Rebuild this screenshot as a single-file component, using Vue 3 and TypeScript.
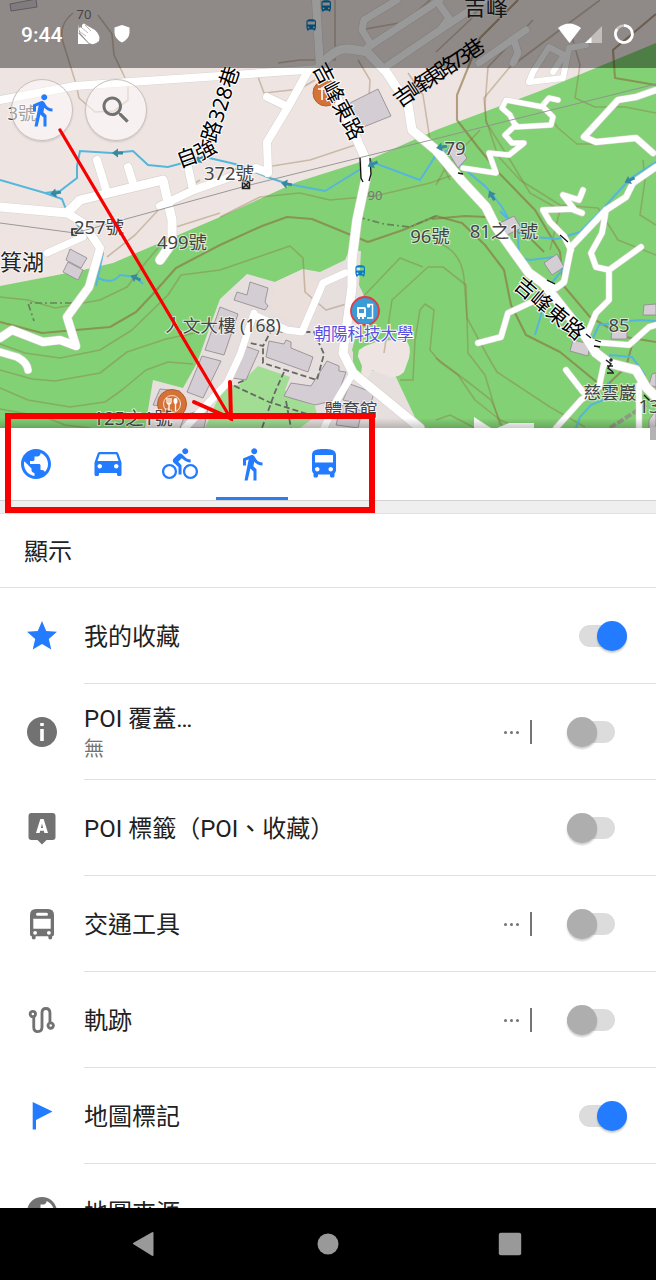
<script setup lang="ts">
type IconName = 'star' | 'info' | 'label' | 'transit' | 'track' | 'flag' | 'globe'

interface Layer {
  title: string
  subtitle?: string
  icon: IconName
  on?: boolean
  more?: boolean
  bare?: boolean
}

interface Label {
  x: number
  y: number
  text: string
  kind: string
  angle?: number
}

const icons: Record<string, string> = {
  star: 'M12 17.27 18.18 21l-1.64-7.03L22 9.24l-7.19-.61L12 2 9.19 8.63 2 9.24l5.46 4.73L5.82 21z',
  info: 'M12 2C6.48 2 2 6.48 2 12s4.48 10 10 10 10-4.48 10-10S17.52 2 12 2zm1.2 16h-2.4v-8h2.4v8zm0-10h-2.4V6h2.4v2z',
  label:
    'M5 2h14q2 0 2 2v14q0 2-2 2h-4l-3 3-3-3H5q-2 0-2-2V4q0-2 2-2zm5.9 4L8 15.4h2.4l.4-1.5h2.4l.4 1.5H16L13.1 6zm1.1 3 .7 3h-1.4z',
  transit:
    'M8 2h8q4 0 4 4v13q0 1-1.2 1.2V21a1.3 1.3 0 0 1-2.6 0v-.8H7.8V21a1.3 1.3 0 0 1-2.6 0v-.8Q4 20 4 19V6q0-4 4-4zm1 2.500Q8 4.500 8 5.500t1 1h6q1 0 1-1t-1-1zM6.2 8.500v6.600h11.6V8.500zM7.4 16.600a1.3 1.3 0 1 0 0 2.6 1.3 1.3 0 0 0 0-2.6zm9.2 0a1.3 1.3 0 1 0 0 2.6 1.3 1.3 0 0 0 0-2.6z',
  flag: 'M5.8 2.7 19 9 8 14.6V21H5.8z',
  globe:
    'M12 2C6.48 2 2 6.48 2 12s4.48 10 10 10 10-4.48 10-10S17.52 2 12 2zm-1 17.93c-3.95-.49-7-3.85-7-7.93 0-.62.08-1.21.21-1.79L9 15v1c0 1.1.9 2 2 2v1.93zm6.9-2.54c-.26-.81-1-1.39-1.9-1.39h-1v-3c0-.55-.45-1-1-1H8v-2h2c.55 0 1-.45 1-1V7h2c1.1 0 2-.9 2-2v-.41c2.93 1.19 5 4.06 5 7.41 0 2.08-.8 3.97-2.1 5.39z',
  car: 'M18.92 5.01C18.72 4.42 18.16 4 17.5 4h-11c-.66 0-1.21.42-1.42 1.01L3 11v8c0 .55.45 1 1 1h1c.55 0 1-.45 1-1v-1h12v1c0 .55.45 1 1 1h1c.55 0 1-.45 1-1v-8l-2.08-5.99zM6.5 15c-.83 0-1.5-.67-1.5-1.5S5.67 12 6.5 12s1.5.67 1.5 1.5S7.33 15 6.5 15zm11 0c-.83 0-1.5-.67-1.5-1.5s.67-1.5 1.5-1.5 1.5.67 1.5 1.5-.67 1.5-1.5 1.5zM5 10l1.5-4.5h11L19 10H5z',
  bike: 'M15.5 5.5c1.1 0 2-.9 2-2s-.9-2-2-2-2 .9-2 2 .9 2 2 2zM5 12c-2.8 0-5 2.2-5 5s2.2 5 5 5 5-2.2 5-5-2.2-5-5-5zm0 8.5c-1.9 0-3.5-1.6-3.5-3.5s1.6-3.5 3.5-3.5 3.5 1.6 3.5 3.5-1.6 3.5-3.5 3.5zm5.8-10l2.4-2.4.8.8c1.3 1.3 3 2.1 5.1 2.1V9c-1.5 0-2.7-.6-3.6-1.5l-1.9-1.9c-.5-.4-1-.6-1.6-.6s-1.1.2-1.4.6L7.8 8.4c-.4.4-.6.9-.6 1.4 0 .6.2 1.1.6 1.4L11 14v5h2v-6.2l-2.2-2.3zM19 12c-2.8 0-5 2.2-5 5s2.2 5 5 5 5-2.2 5-5-2.2-5-5-5zm0 8.5c-1.9 0-3.5-1.6-3.5-3.5s1.6-3.5 3.5-3.5 3.5 1.6 3.5 3.5-1.6 3.5-3.5 3.5z',
  walk: 'M13.5 5.5c1.1 0 2-.9 2-2s-.9-2-2-2-2 .9-2 2 .9 2 2 2zM9.8 8.9L7 23h2.1l1.8-8 2.1 2v6h2v-7.5l-2.1-2 .6-3C14.8 12 16.8 13 19 13v-2c-1.9 0-3.5-1-4.3-2.4l-1-1.6c-.4-.6-1-1-1.7-1-.3 0-.5.1-.8.1L6 8.3V13h2V9.6l1.8-.7',
  bus: 'M4 16c0 .88.39 1.67 1 2.22V20c0 .55.45 1 1 1h1c.55 0 1-.45 1-1v-1h8v1c0 .55.45 1 1 1h1c.55 0 1-.45 1-1v-1.78c.61-.55 1-1.34 1-2.22V6c0-3.5-3.58-4-8-4s-8 .5-8 4v10zm3.5 1c-.83 0-1.5-.67-1.5-1.5S6.67 14 7.5 14s1.5.67 1.5 1.5S8.33 17 7.5 17zm9 0c-.83 0-1.5-.67-1.5-1.5s.67-1.5 1.5-1.5 1.5.67 1.5 1.5-.67 1.5-1.5 1.5zm1.5-6H6V6h12v5z',
  search:
    'M15.5 14h-.79l-.28-.27C15.41 12.59 16 11.11 16 9.5 16 5.91 13.09 3 9.5 3S3 5.91 3 9.5 5.91 16 9.5 16c1.61 0 3.09-.59 4.23-1.57l.27.28v.79l5 4.99L20.49 19l-4.99-5zm-6 0C7.01 14 5 11.99 5 9.5S7.01 5 9.5 5 14 7.01 14 9.5 11.99 14 9.5 14z',
}

const profiles = ['globe', 'car', 'bike', 'walk', 'bus']
const activeProfile = 'walk'

const layers: Layer[] = [
  { title: '我的收藏', icon: 'star', on: true },
  { title: 'POI 覆蓋…', subtitle: '無', icon: 'info', more: true },
  { title: 'POI 標籤（POI、收藏）', icon: 'label' },
  { title: '交通工具', icon: 'transit', more: true },
  { title: '軌跡', icon: 'track', more: true },
  { title: '地圖標記', icon: 'flag', on: true },
  { title: '地圖來源', icon: 'globe', bare: true },
]

const contours = [
  'M73 13Q58 25 63 42L76 84L79 98L95 112L114 111L128 100V84L114 55L112 34L98 15',
  'M0 297L28 300L55 308L100 300L127 287L146 262L176 227L220 213',
  'M0 344L25 353L60 358L100 350L132 330L168 295L181 275L220 270L290 246L303 258L305 292L326 310L360 300L400 258L423 267',
  'M0 370L32 379L55 381L100 373L127 352L166 339L195 333',
  'M0 388L28 400L70 407L105 402L122 390L146 370L168 362L193 364',
  'M0 409L45 417L65 425L90 428',
  'M107 257L135 235L163 205L200 180',
  'M220 217L260 197L300 193L330 200L375 196L430 183L450 176L470 168',
  'M358 60L370 80L368 115L355 145L310 160L266 167L235 169',
  'M258 77L264 93L300 89L315 80M278 63L300 60L335 60V0',
  'M384 353L392 300L428 267H443L466 285L468 353L485 375L500 425',
  'M436 242Q461 250 464 278L467 318L487 355L497 372L550 407L585 427',
  'M436 358L468 382L491 400L503 428M436 420L450 415L475 428',
  'M533 20L488 67L485 105L486 122L510 160L530 193L560 210L550 250',
  'M600 0L553 35L509 68L484 98L486 120L498 156L520 180L560 205L598 208L618 240L656 255',
  'M570 30L580 65L575 98L595 107L625 107L656 113',
  'M545 110L558 128L577 144H605M643 160L645 180L640 215L656 225',
  'M408 73L423 95L430 140L450 180M436 185L447 165L480 130',
  'M400 380L413 380L415 340L420 310L425 304L434 310L430 350L440 362L458 375L475 400L500 420L520 428',
  'M485 0L470 20L436 52M430 0L405 22L360 30',
]

const majorContours = [
  'M0 322L42 333L110 327L136 312L152 295L176 268L220 245L262 226L287 217L312 219L368 242L403 230L436 216L462 223L485 245L504 270L511 305L526 335L560 352L604 388L626 367L632 345',
  'M518 0L480 38L457 95V120L477 146L499 173L535 210L560 252L563 285L590 317L625 337L656 342',
  'M656 14L613 50L615 78L656 85',
  'M432 219L465 216L486 217L530 238L544 252',
]

const streams = [
  'M0 180L45 193L60 191L77 178V166L80 151L112 153L133 151L148 165L168 167L205 157L235 164L270 178L288 184L325 191L372 162L420 180L436 155L449 150L467 171L486 187L502 207L518 236L519 258L530 260L554 257M500 211L524 236L557 239L580 232L600 212L618 192L631 178L656 162',
  'M45 193L62 199L67 212L84 233L103 253L96 286M98 278Q112 285 120 275L136 277L143 284',
  'M555 256L563 269L550 285L535 335M586 353L599 325L620 322L640 320L656 321M607 365L610 355L632 357L645 375L638 387M608 382V398L591 405L580 417L576 428',
]

const roads = [
  { w: 8, d: 'M0 100L75 86L130 82L220 76L318 69' },
  { w: 8, d: 'M316 0L320 66M308 71L288 107L267 142L268 173M267 97L288 107M256 168L267 172' },
  { w: 9, d: 'M320 66L340 104L358 142L366 160V178L357 220L352 260V287L343 353L353 373L420 428' },
  { w: 9, d: 'M320 66Q335 48 347 49T367 52L387 73L408 105L412 130L436 150L461 180L486 207L496 227L529 273L543 283L586 337L596 353L609 363L636 370L646 387L656 397' },
  { w: 7, d: 'M397 0L364 20L362 30L370 43L367 53M440 0L367 48M387 66L440 30L485 0M436 0L449 18L440 30M526 30L479 63M514 40L518 53L513 63' },
  { w: 9, d: 'M0 207L67 213L80 200L163 180L172 220V243L160 260' },
  { w: 8, d: 'M97 160L107 193M128 167L133 183M188 167L193 190M160 206L194 190L256 168' },
  { w: 8, d: 'M67 213L83 223L100 248L89 287L67 317L76 346L60 340L43 342L12 330L0 338' },
  { w: 7, d: 'M83 237L47 253M0 352L17 357Q27 362 28 370' },
  { w: 7, d: 'M345 273L323 283L302 332L287 330M254 313L240 355L227 383L185 428M353 373L337 400L324 428M254 315L287 330' },
  { w: 6, d: 'M529 82L533 72L549 47L564 55L553 72M529 82L563 78L569 48L586 45' },
  { w: 5, d: 'M506 100L543 107L553 117L551 125L516 127L510 115L502 108L506 100M543 105L549 98L558 100M516 125L505 135L512 143L524 143L509 155L489 153L496 173L463 168' },
  { w: 6, d: 'M656 90L636 97L618 100L584 137L596 142L636 138L653 153M656 167L633 183L626 197L606 210L571 247L564 282L556 288L543 283' },
  { w: 5.500, d: 'M583 190L579 200L563 195L574 209L543 210L550 222L564 236L571 250M574 210L582 213M606 210L602 233L591 253L596 267L609 270V300L596 313L586 337M609 270L641 247' },
  { w: 5.500, d: 'M536 300L508 313L501 337L478 343M591 342L629 345L649 327L656 325M604 363L599 387L581 400L556 428M566 370L583 392M639 385V428' },
]

const buildings = [
  '10,4 36,-1 37,7 11,11', '350,103 378,89 391,116 361,128', '70,249 87,258 81,268 66,260', '68,262 83,270 78,280 63,272',
  '250,282 268,288 265,302 268,306 265,310 234,300 237,292 247,295', '220,307 238,314 224,355 205,350', '202,356 221,361 203,398 187,392',
  '245,346 259,351 246,380 232,378', '269,341 284,344 286,340 291,342 291,348 313,357 308,372 266,357',
  '327,361 339,366 339,371 346,372 336,400 315,405 284,396 291,383 311,386', '350,384 374,393 370,406 343,400',
  '341,405 362,411 358,428 336,425', '160,389 180,391 176,408 153,405', '185,415 208,408 204,428 180,428',
  '447,150 456,142 467,158 458,168', '500,223 514,216 521,228 507,235', '544,263 557,254 564,267 552,275', '644,305 656,304 656,315 643,315',
  '573,340 590,344 588,356 570,351', '612,330 627,331 627,339 611,339', '652,374 656,373 656,387 649,385', '649,420 656,410 656,428 649,428',
]

const arrows = [
  { x: 118, y: 153, a: 180 }, { x: 56, y: 193, a: 170 }, { x: 287, y: 184, a: 190 }, { x: 373, y: 164, a: 155 },
  { x: 442, y: 147, a: 170 }, { x: 492, y: 196, a: 240 }, { x: 630, y: 180, a: 155 }, { x: 136, y: 278, a: 205 }, { x: 200, y: 159, a: 150 },
]

const labels: Label[] = [
  { x: 84, y: 19, text: '70', kind: 'contour' },
  { x: 375, y: 200, text: '90', kind: 'contour' },
  { x: 22, y: 120, text: '3號', kind: 'house' },
  { x: 229, y: 180, text: '372號', kind: 'house' },
  { x: 99, y: 234, text: '257號', kind: 'house' },
  { x: 182, y: 249, text: '499號', kind: 'house' },
  { x: 430, y: 243, text: '96號', kind: 'house' },
  { x: 504, y: 238, text: '81之1號', kind: 'house' },
  { x: 455, y: 155, text: '79', kind: 'house' },
  { x: 619, y: 332, text: '85', kind: 'house' },
  { x: 133, y: 425, text: '125之1號', kind: 'house' },
  { x: 649, y: 413, text: '13', kind: 'house' },
  { x: 223, y: 332, text: '人文大樓 (168)', kind: 'place' },
  { x: 351, y: 416, text: '體育館', kind: 'place' },
  { x: 610, y: 399, text: '慈雲巖', kind: 'place' },
  { x: 22, y: 270, text: '箕湖', kind: 'town' },
  { x: 486, y: 15, text: '吉峰', kind: 'town' },
  { x: 364, y: 340, text: '朝陽科技大學', kind: 'school' },
  { x: 187, y: 157, text: '自', kind: 'street', angle: -20 },
  { x: 205, y: 149, text: '強', kind: 'street', angle: -28 },
  { x: 220, y: 104, text: '路328巷', kind: 'street', angle: -72 },
  { x: 339, y: 101, text: '吉峰東路', kind: 'street', angle: 62 },
  { x: 437, y: 73, text: '吉峰東路73巷', kind: 'street tight', angle: -34 },
  { x: 550, y: 308, text: '吉峰東路', kind: 'street', angle: 40 },
]
</script>

<template>
  <div class="screen">
    <section class="map">
      <svg class="map-canvas" viewBox="0 0 656 428" width="656" height="428">
        <rect width="656" height="428" class="green" />
        <path class="urban" d="M0 0H656V43L540 91L436 130L373 158L297 182L220 217L113 263L83 270L0 286z" />
        <path class="campus" d="M220 299L247 274L275 282L303 269L320 272L345 260L349 251H361L359 285L366 300L352 350L362 372L377 370L395 375L420 428H145L153 380L183 388L197 363L213 318z" />
        <path class="urban" d="M359 350Q375 338 405 340Q412 345 409 358L404 372Q396 380 385 375L372 370L366 381L355 372z" />
        <path class="green" d="M353 345L362 366L361 374L353 370z" />
        <path class="lawn" d="M258 366L290 377L285 390L289 396L315 406L317 415L300 428H205L224 385H239z" />
        <path class="plaza" d="M275 282L303 269L312 278L320 284L301 328L270 310z" />

        <path v-for="(d, i) in contours" :key="'c' + i" :d="d" class="contour" />
        <path v-for="(d, i) in majorContours" :key="'m' + i" :d="d" class="contour major" />
        <path v-for="(d, i) in streams" :key="'s' + i" :d="d" class="stream" />
        <polygon v-for="(p, i) in buildings" :key="'b' + i" :points="p" class="building" />
        <path class="path" d="M242 341L263 346L271 331L287 332L314 332L324 354L317 380L263 363V346M226 382L269 402L320 418M284 372L275 392L262 428M286 401L291 428M238 383L245 380" />
        <path class="trail" d="M72 303H28L34 321M358 217L384 224L410 227L436 216" />
        <path class="trail wide" d="M610 428L647 404" />

        <path v-for="(r, i) in roads" :key="'e' + i" :d="r.d" class="road-edge" :stroke-width="r.w + 1.2" />
        <path v-for="(r, i) in roads" :key="'r' + i" :d="r.d" class="road" :stroke-width="r.w" />
        <path class="white" d="M474 417L491 428H474zM497 428L509 423H534V428z" />
        <path class="powerline" d="M0 223L75 233L246 186L656 84" />
        <path class="culvert" d="M360 158L361 178L363 182M370 158L371 174L369 181M458 173L463 174M560 235L568 242M547 280L555 284M586 334L591 338M595 340L601 342M594 346L600 347M644 395L650 401" />
        <g v-for="(a, i) in arrows" :key="'a' + i" :transform="`translate(${a.x} ${a.y}) rotate(${a.a})`">
          <path class="flow" d="M-5-1.500H0V-4.500L6 0L0 4.500V1.500H-5z" />
        </g>

        <g transform="translate(326 93)">
          <circle r="13" class="food" />
          <path d="M-4-6V7M4-6V7M-8-4H8" class="cutlery" />
        </g>
        <g transform="translate(172 404)">
          <circle r="14.5" class="food" />
          <circle r="8.500" class="plate" />
          <path d="M-5-6V-2Q-5 0-3 0T-1-2V-6M-3-6V7" class="cutlery thin" />
          <ellipse cx="3.500" cy="-3" rx="2" ry="3" class="white" />
          <path d="M3.500-2V7" class="cutlery thin" />
        </g>
        <g transform="translate(365 311)">
          <circle r="14" class="stop" />
          <path class="white" fill-rule="evenodd" d="M-7-4H-1Q1-4 1-2V6H-1V8H-3V6H-5V8H-7V6H-8V-3Q-8-4-7-4zM-6-2V2H-1V-2z" />
          <path class="shelter" d="M2-6.500H7.500V7H2" />
          <circle cx="3.500" cy="-5" r="1.700" class="white" />
        </g>
        <g class="bus-marks">
          <path :d="icons.bus" transform="translate(353 264) scale(.6)" />
          <path :d="icons.bus" transform="translate(304 18) scale(.6)" />
          <path :d="icons.bus" transform="translate(319 -1) scale(.6)" />
        </g>
        <g class="mini">
          <rect x="242.5" y="181.5" width="7" height="7" /><path d="M243 182L249 188M249 182L243 188" />
          <path d="M78 229H72V235H77M74 232H77" />
          <path d="M606 360L611 364L608 368L613 372M607 366L613 366M607 373H614" />
          <circle cx="611" cy="360" r="1" />
        </g>

        <text
          v-for="l in labels"
          :key="l.text + l.x"
          :class="['label', l.kind]"
          :transform="`translate(${l.x} ${l.y}) rotate(${l.angle ?? 0})`"
          :y="l.angle ? 8 : 0"
        >{{ l.text }}</text>
      </svg>

      <header class="status">
        <span class="clock">9:44</span>
        <svg class="hand" viewBox="0 0 24 24" width="24" height="24">
          <path d="M1 2V22H12L3 13Q0 10 3 10L2 7Q2 4 5 6L5 3Q7 0 9 3L18 8Q24 14 22 19Q17 24 12 21L2 10z" />
          <path d="M5 6L11 11M8 3L14 9M3 10L9 14" class="finger" />
        </svg>
        <svg class="shield" viewBox="0 0 18 20" width="18" height="20">
          <path d="M9 1L16.500 3.500V9Q16 15 9 18.500Q2 15 1.500 9V3.500z" />
        </svg>
        <span class="grow"></span>
        <svg class="signals" viewBox="0 0 80 24" width="80" height="24">
          <path d="M2 6Q13-3 25 6L13.500 21z" />
          <path d="M46 4V21H29z" opacity=".45" />
          <path d="M35.500 15V21H29z" />
          <circle cx="68" cy="12" r="8.500" class="ring-faint" />
          <path d="M68 3.500A8.500 8.500 0 1 1 61 7" class="ring" />
        </svg>
      </header>

      <nav class="map-tools">
        <button class="round" aria-label="設定檔">
          <svg viewBox="0 0 24 24" width="36" height="36" class="blue"><path :d="icons.walk" /></svg>
        </button>
        <button class="round" aria-label="搜尋">
          <svg viewBox="0 0 24 24" width="36" height="36" class="gray"><path :d="icons.search" /></svg>
        </button>
      </nav>
      <div class="map-shade"></div>
    </section>

    <main class="sheet">
      <nav class="tabs">
        <button v-for="p in profiles" :key="p" :class="['tab', { active: p === activeProfile }]" :aria-label="p">
          <svg viewBox="0 0 24 24" width="36" height="36" class="blue"><path :d="icons[p]" /></svg>
        </button>
      </nav>
      <div class="gap"></div>
      <h2 class="heading">顯示</h2>
      <div class="list">
        <div v-for="l in layers" :key="l.title" class="row">
          <div class="lead">
            <svg viewBox="0 0 24 24" width="36" height="36" :class="l.on ? 'blue' : 'gray'">
              <g v-if="l.icon === 'track'" class="track">
                <path d="M6.500 10V16.800Q6.500 19.700 9.200 19.700T12 16.800V7.200Q12 4.300 14.600 4.300T17.300 7.200V13.500" />
                <circle cx="5.900" cy="8" r="1.800" /><circle cx="17.800" cy="15.700" r="1.800" />
              </g>
              <path v-else :d="icons[l.icon]" fill-rule="evenodd" />
            </svg>
          </div>
          <div class="body">
            <div class="texts">
              <div class="title">{{ l.title }}</div>
              <div v-if="l.subtitle" class="subtitle">{{ l.subtitle }}</div>
            </div>
            <div v-if="l.more" class="more"><i></i><i></i><i></i></div>
            <div v-if="!l.bare" :class="['switch', { on: l.on }]"><span class="thumb"></span></div>
          </div>
        </div>
      </div>
    </main>

    <footer class="navbar">
      <svg viewBox="0 0 24 26" width="24" height="26"><path d="M2 12.500L20.500 2V24z" stroke-linejoin="round" stroke-width="2" /></svg>
      <svg viewBox="0 0 24 24" width="24" height="24"><circle cx="13" cy="12" r="10.500" /></svg>
      <svg viewBox="0 0 24 24" width="24" height="24"><rect x=".8" y=".8" width="22.400" height="22.400" rx="2" /></svg>
    </footer>

    <div class="scroll-mark"></div>
    <svg class="annotation" viewBox="0 0 656 1280" width="656" height="1280">
      <rect x="8" y="416" width="364" height="94" stroke-width="6" />
      <path d="M60 130L231 419" stroke-width="3.200" />
      <path d="M194 402L231 418.500L230 382" stroke-width="4" />
    </svg>
  </div>
</template>

<style>
body {
  margin: 0;
}
</style>

<style scoped>
.screen {
  position: relative;
  display: flex;
  flex-direction: column;
  width: 656px;
  height: 1280px;
  overflow: hidden;
  background: #fff;
  font-family: Roboto, "Noto Sans CJK TC", sans-serif;
  color: #212121;
}
button {
  border: 0;
  padding: 0;
  background: none;
}
svg {
  display: block;
}
.blue { fill: #237bff; }
.gray { fill: #727272; }

.map {
  position: relative;
  height: 428px;
  flex: none;
  overflow: hidden;
}
.map-canvas {
  position: absolute;
  inset: 0;
  fill: none;
}
.green { fill: #83d175; }
.urban { fill: #eee5e3; }
.campus { fill: #e6dfde; }
.plaza { fill: #eadfdb; }
.lawn { fill: #a1dd93; }
.contour {
  stroke: #8b6c3c;
  stroke-opacity: .36;
  stroke-width: 1.6;
  stroke-linejoin: round;
}
.major {
  stroke-opacity: .6;
  stroke-width: 2.1;
}
.stream {
  stroke: #55b6dc;
  stroke-width: 2;
}
.building {
  fill: #d4cdd3;
  stroke: #8d868b;
  stroke-width: .8;
}
.path {
  stroke: #666963;
  stroke-width: 1.8;
  stroke-dasharray: 6 3;
}
.trail {
  stroke: #65845a;
  stroke-width: 1.7;
  stroke-dasharray: 7 3 2 3;
}
.wide { stroke-width: 4; stroke: #8d9b84; stroke-dasharray: 7 2; }
.road-edge, .road {
  stroke: #d8d4cf;
  stroke-linecap: round;
  stroke-linejoin: round;
}
.road { stroke: #fff; }
.white { fill: #fff; }
.powerline { stroke: #8e8e8e; stroke-width: .9; }
.culvert { stroke: #111; stroke-width: 1.3; }
.flow { fill: #36899f; }
.food { fill: #d47338; stroke: #b95d28; stroke-width: 1; }
.plate { stroke: #fff; stroke-width: .8; }
.cutlery { stroke: #fff; stroke-width: 1.6; }
.thin { stroke-width: 1.3; }
.stop { fill: #3b9bd4; stroke: #df3d43; stroke-width: 1.8; }
.shelter { stroke: #fff; stroke-width: 1.5; }
.bus-marks { fill: #087dc1; }
.mini { stroke: #222; stroke-width: 1.5; }
.label {
  font-family: "Noto Sans", "Noto Sans CJK TC", sans-serif;
  font-size: 18.500px;
  text-anchor: middle;
  fill: #444;
  paint-order: stroke;
  stroke: rgba(255, 255, 255, .65);
  stroke-width: 2px;
}
.label.contour { font-size: 13px; fill: #777; stroke: none; stroke-opacity: 1; }
.label.place { font-size: 17.600px; }
.label.town { font-size: 22px; fill: #222; }
.label.street { font-size: 21px; fill: #000; stroke: #fff; }
.label.tight { letter-spacing: -4px; stroke: none; }
.label.school { font-size: 16.500px; fill: #584ee0; stroke: #fff; }

.status {
  position: relative;
  display: flex;
  align-items: center;
  height: 68px;
  padding: 0 20px 0 21px;
  box-sizing: border-box;
  background: rgba(0, 0, 0, .4);
  color: #fff;
  fill: #fff;
}
.clock {
  width: 56px;
  padding-top: 2px;
  font-size: 21px;
  font-weight: 500;
  line-height: 24px;
}
.shield { margin-left: 12px; }
.finger { stroke: #8e8988; stroke-width: .6; }
.grow { flex: 1; }
.ring, .ring-faint { fill: none; stroke: #fff; stroke-width: 2.600; }
.ring-faint { stroke-opacity: .5; }
.map-tools {
  position: relative;
  display: flex;
  gap: 12px;
  padding: 11px 0 0 11px;
}
.round {
  display: flex;
  align-items: center;
  justify-content: center;
  box-sizing: border-box;
  width: 62px;
  height: 62px;
  border: 1px solid #c8c0bd;
  border-radius: 50%;
  background: rgba(255, 255, 255, .5);
  box-shadow: 0 1px 2px rgba(0, 0, 0, .15);
}
.map-shade {
  position: absolute;
  left: 0;
  right: 0;
  bottom: 0;
  height: 10px;
  background: linear-gradient(transparent, rgba(0, 0, 0, .2));
}

.sheet {
  flex: 1;
  min-height: 0;
  overflow: hidden;
}
.tabs {
  display: flex;
  height: 72px;
  border-bottom: 1px solid #d2d2d2;
}
.tab {
  display: flex;
  align-items: center;
  justify-content: center;
  width: 72px;
  border-top: 3px solid transparent;
  border-bottom: 3px solid transparent;
}
.tab.active { border-bottom-color: #2f7cec; }
.gap {
  height: 13px;
  background: #efefef;
  box-sizing: border-box;
  border-bottom: 1px solid #e2e2e2;
}
.heading {
  display: flex;
  align-items: center;
  box-sizing: border-box;
  height: 74px;
  margin: 0;
  padding: 0 0 3px 24px;
  border-bottom: 1px solid #dfdfdf;
  font-size: 24px;
  font-weight: 400;
}
.row {
  display: flex;
  height: 96px;
}
.lead {
  display: flex;
  flex: none;
  align-items: center;
  width: 84px;
  padding-left: 24px;
  box-sizing: border-box;
}
.body {
  display: flex;
  flex: 1;
  align-items: center;
  box-sizing: border-box;
  padding: 1px 29px 0 0;
  border-bottom: 1px solid #dfdfdf;
}
.texts {
  flex: 1;
  padding-top: 2px;
}
.title {
  font-size: 24px;
  line-height: 32px;
}
.subtitle {
  font-size: 20px;
  line-height: 28px;
  color: #727272;
}
.track { fill: none; stroke: #727272; stroke-width: 1.900; }
.more {
  display: flex;
  align-items: center;
  gap: 3px;
  height: 24px;
  padding-right: 11px;
  margin-right: 35px;
  border-right: 2px solid #757575;
}
.more i {
  width: 3px;
  height: 3px;
  border-radius: 50%;
  background: #727272;
}
.switch {
  display: flex;
  align-items: center;
  width: 48px;
  height: 22px;
  margin-right: 12px;
  border-radius: 11px;
  background: #dcdcdc;
}
.switch.on {
  justify-content: flex-end;
  margin-right: 0;
}
.thumb {
  width: 30px;
  height: 30px;
  border-radius: 50%;
  background: #aeaeae;
  box-shadow: 0 2px 2px rgba(0, 0, 0, .2);
}
.on .thumb { background: #237bff; }

.navbar {
  display: flex;
  flex: none;
  align-items: center;
  justify-content: space-between;
  box-sizing: border-box;
  height: 72px;
  padding: 0 134px 0 132px;
  background: #000;
  fill: #999;
  stroke: #999;
  stroke-width: 0;
}
.scroll-mark {
  position: absolute;
  top: 427px;
  right: 0;
  width: 6px;
  height: 13px;
  background: #b3b3b3;
}
.annotation {
  position: absolute;
  inset: 0;
  fill: none;
  stroke: #f80000;
  pointer-events: none;
}
.annotation path { stroke-linecap: round; }
</style>
